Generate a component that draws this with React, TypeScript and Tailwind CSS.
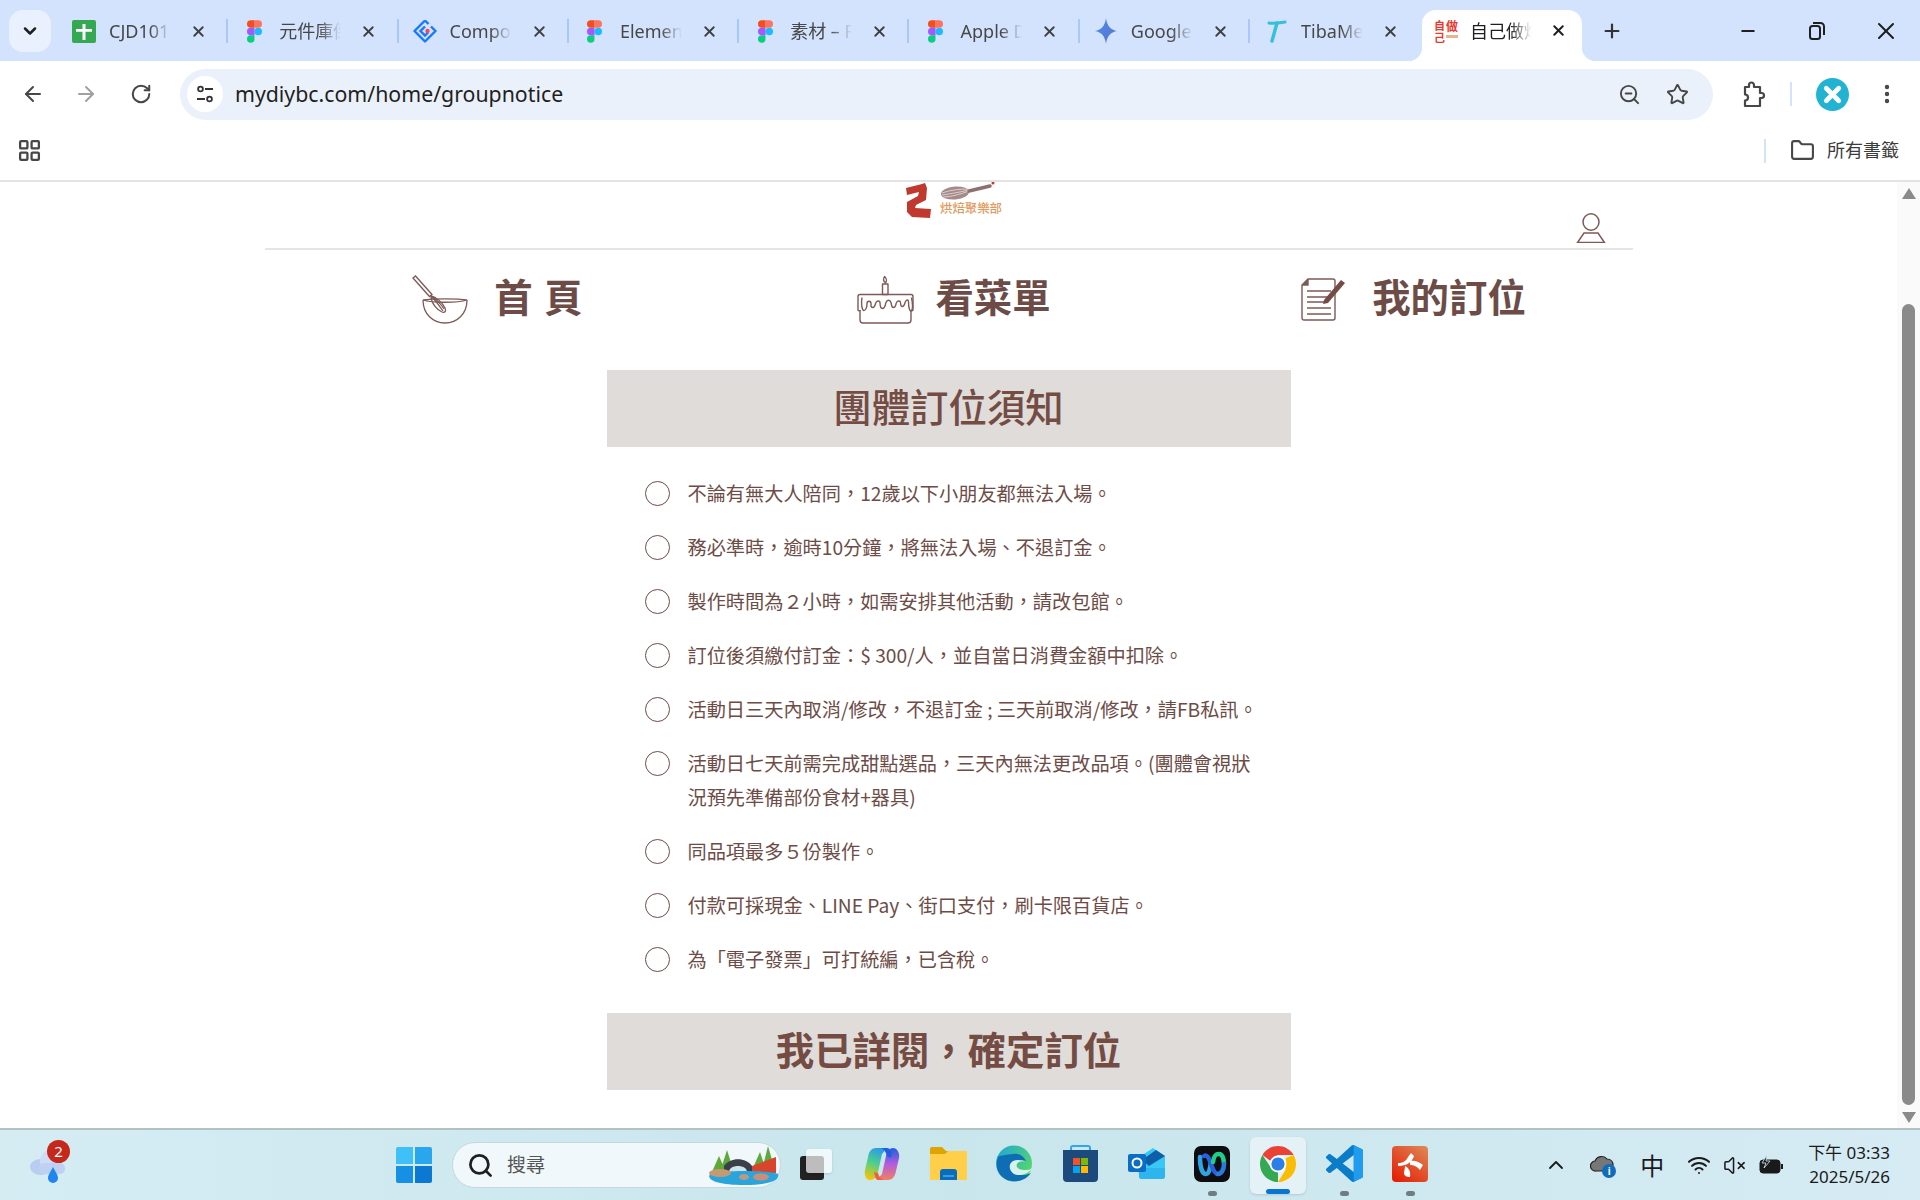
import { ArrowLeft, ArrowRight, ChevronDown, ChevronUp, EllipsisVertical, Folder, LayoutGrid, Minus, Plus, RotateCw, Search, Star, VolumeX, Wifi, X, ZoomOut } from "lucide-react";
import type { ReactNode } from "react";

const uiFont = "font-['Noto_Sans','Noto_Sans_CJK_TC',sans-serif]";

const Figma = () => (
  <svg width="15" height="23" viewBox="0 0 38 57">
    <path d="M19 28.5a9.5 9.5 0 1 1 19 0 9.5 9.5 0 0 1-19 0z" fill="#1abcfe" />
    <path d="M0 47.5A9.5 9.5 0 0 1 9.5 38H19v9.5a9.5 9.5 0 1 1-19 0z" fill="#0acf83" />
    <path d="M19 0v19h9.5a9.5 9.5 0 1 0 0-19H19z" fill="#ff7262" />
    <path d="M0 9.5A9.5 9.5 0 0 0 9.5 19H19V0H9.5A9.5 9.5 0 0 0 0 9.5z" fill="#f24e1e" />
    <path d="M0 28.5A9.5 9.5 0 0 0 9.5 38H19V19H9.5A9.5 9.5 0 0 0 0 28.5z" fill="#a259ff" />
  </svg>
);

const Sheets = () => (
  <svg width="24" height="23" viewBox="0 0 24 23">
    <rect width="24" height="23" rx="2" fill="#34a853" />
    <path d="M10.500 4h3v5H20v2.800h-6.500V20h-3v-8.200H4V9h6.500z" fill="#fff" />
  </svg>
);

const Diamond = () => (
  <svg width="24" height="24" viewBox="0 0 24 24" fill="none">
    <path d="M12 1.500 1.500 12 12 22.500 22.500 12 18 7.500" stroke="#1677ff" strokeWidth="2.400" strokeLinejoin="round" />
    <path d="M12 1.500 15.500 5M12 7.500 7.500 12 12 16.500 15 13.500" stroke="#1677ff" strokeWidth="2.400" />
    <circle cx="14.500" cy="12" r="2.200" fill="#f5484f" />
  </svg>
);

const Gemini = () => (
  <svg width="22" height="26" viewBox="0 0 24 24" preserveAspectRatio="none">
    <defs>
      <linearGradient id="gem" x1="0" y1="0" x2="1" y2="1">
        <stop offset="0" stopColor="#4a90e8" />
        <stop offset="1" stopColor="#5b6fd0" />
      </linearGradient>
    </defs>
    <path d="M12 0c1 7 5 11 12 12-7 1-11 5-12 12-1-7-5-11-12-12 7-1 11-5 12-12z" fill="url(#gem)" />
  </svg>
);

const Tiba = () => (
  <svg width="24" height="24" viewBox="0 0 24 24" fill="none">
    <path d="M5 4c5 1 10 0 16-1" stroke="#35bfd8" strokeWidth="3" strokeLinecap="round" />
    <path d="M13 4 8 22" stroke="#35bfd8" strokeWidth="3.400" strokeLinecap="round" />
  </svg>
);

const SiteIcon = () => (
  <div className="flex w-[24px] h-[24px] items-start gap-[1px] overflow-hidden font-['Noto_Sans_CJK_TC',sans-serif] font-bold text-[#e8392f] leading-none">
    <div className="flex flex-col text-[11px] leading-[12px]">
      <span>自</span>
      <span>己</span>
    </div>
    <div className="flex flex-col items-center text-[12px] leading-[14px]">
      <span>做</span>
      <div className="mt-[2px] h-[3px] w-[12px] bg-[#e8b48a]" />
    </div>
  </div>
);

const tabs: { icon: ReactNode; title: string }[] = [
  { icon: <Sheets />, title: "CJD101" },
  { icon: <Figma />, title: "元件庫倒" },
  { icon: <Diamond />, title: "Compon" },
  { icon: <Figma />, title: "Element" },
  { icon: <Figma />, title: "素材 – Fi" },
  { icon: <Figma />, title: "Apple De" },
  { icon: <Gemini />, title: "Google" },
  { icon: <Tiba />, title: "TibaMe" },
];

const fade = "[mask-image:linear-gradient(to_right,black_65%,transparent_100%)]";

const Tab = ({ icon, title, last }: { icon: ReactNode; title: string; last: boolean }) => (
  <div className="flex w-[170.300px] h-[42px] items-center">
    <div className="flex w-[24px] ml-[14px] justify-center shrink-0">{icon}</div>
    <span className={`ml-[13px] w-[62px] shrink-0 overflow-hidden whitespace-nowrap text-[18px] text-[#474747] ${fade}`}>{title}</span>
    <X className="ml-[19px] shrink-0 text-[#3f3f3f]" size={17} strokeWidth={2.600} />
    <div className={`ml-auto h-[24px] w-[2px] ${last ? "bg-transparent" : "bg-[#a8c7fa]"}`} />
  </div>
);

const PuzzleIcon = () => (
  <svg width="25" height="27" viewBox="0 0 25 27" fill="none" stroke="#474747" strokeWidth="2.200" strokeLinejoin="round">
    <path d="M4 6h4V4a2.500 2.500 0 0 1 5 0v2h6v6h1.500a2.500 2.500 0 0 1 0 5H19v8H4v-5.500a3 3 0 0 0 0-6z" />
  </svg>
);

const RestoreIcon = () => (
  <svg width="18" height="20" viewBox="0 0 18 20" fill="none" stroke="#1f1f1f" strokeWidth="2">
    <rect x="2" y="5" width="10" height="13" rx="2.500" />
    <path d="M5 2h7.500A3.500 3.500 0 0 1 16 5.500V14" />
  </svg>
);

const BrowserChrome = () => (
  <div className={`${uiFont} shrink-0`}>
    <div className="flex h-[61px] bg-[#d3e3fd] pt-[10px] items-start pl-[9px]">
      <div className="flex w-[42px] h-[42px] items-center justify-center rounded-[14px] bg-[#e9f1fe]">
        <ChevronDown size={20} strokeWidth={3} className="text-[#1f1f1f]" />
      </div>
      <div className="w-[7px]" />
      {tabs.map((t, i) => (
        <Tab key={t.title} icon={t.icon} title={t.title} last={i === tabs.length - 1} />
      ))}
      <div className="relative ml-[1.600px] flex w-[160px] h-[51px] items-start pt-[9px] rounded-t-[14px] bg-white">
        <span className="absolute -left-[14px] bottom-0 h-[14px] w-[14px] bg-[radial-gradient(circle_at_0_0,#d3e3fd_14px,white_14.5px)]" />
        <span className="absolute -right-[14px] bottom-0 h-[14px] w-[14px] bg-[radial-gradient(circle_at_100%_0,#d3e3fd_14px,white_14.5px)]" />
        <div className="ml-[12px] shrink-0"><SiteIcon /></div>
        <span className={`ml-[12px] w-[62px] shrink-0 overflow-hidden whitespace-nowrap text-[18px] leading-[24px] text-[#1f1f1f] ${fade}`}>自己做烘</span>
        <X className="ml-[18px] mt-[3px] shrink-0 text-[#1f1f1f]" size={17} strokeWidth={2.800} />
      </div>
      <div className="flex w-[62px] h-[42px] items-center justify-center">
        <Plus size={22} strokeWidth={2.400} className="text-[#333] ml-[-2px]" />
      </div>
      <div className="ml-auto flex h-[30px] items-center mt-[6px] text-[#1f1f1f]">
        <div className="flex w-[69px] justify-center"><Minus size={20} strokeWidth={2.200} /></div>
        <div className="flex w-[69px] justify-center"><RestoreIcon /></div>
        <div className="flex w-[69px] justify-center"><X size={28} strokeWidth={1.700} /></div>
      </div>
    </div>
    <div className="flex h-[61px] items-center bg-white rounded-t-[12px] pt-[5px] text-[#474747]">
      <div className="flex w-[66px] justify-center"><ArrowLeft size={24} strokeWidth={2} /></div>
      <div className="flex w-[40px] justify-center"><ArrowRight size={24} strokeWidth={2} className="text-[#a0a0a0]" /></div>
      <div className="flex w-[70px] justify-center"><RotateCw size={22} strokeWidth={2.200} /></div>
      <div className="ml-[4px] flex w-[1533px] h-[51px] items-center rounded-full bg-[#ebf1fa]">
        <div className="ml-[7px] flex w-[36px] h-[36px] items-center justify-center rounded-full bg-white">
          <svg width="20" height="20" viewBox="0 0 20 20" fill="none" stroke="#333" strokeWidth="1.800">
            <circle cx="5.500" cy="5" r="2.400" />
            <path d="M10 5h8M2 15h8" />
            <circle cx="14.500" cy="15" r="2.400" />
          </svg>
        </div>
        <span className="ml-[12px] text-[21.300px] text-[#1f1f1f]">mydiybc.com/home/groupnotice</span>
        <ZoomOut size={23} strokeWidth={2} className="ml-auto" />
        <Star size={23} strokeWidth={2} className="ml-[25px] mr-[24px]" />
      </div>
      <div className="ml-[28px]"><PuzzleIcon /></div>
      <div className="ml-[24px] h-[24px] w-[2px] bg-[#d3e3fd]" />
      <div className="ml-[24px] flex w-[33px] h-[33px] items-center justify-center rounded-full bg-[#22b2d2]">
        <X size={25} strokeWidth={4.500} className="text-white" />
      </div>
      <EllipsisVertical size={24} strokeWidth={2.400} className="ml-[26px]" />
    </div>
    <div className="flex h-[60px] items-center bg-white border-b-2 border-[#e3e3e3] pb-[1px] text-[#474747]">
      <LayoutGrid size={25} strokeWidth={2.200} className="ml-[17px]" />
      <div className="ml-auto h-[24px] w-[2px] bg-[#d3e3fd]" />
      <Folder size={25} strokeWidth={2} className="ml-[24px]" />
      <span className="ml-[12px] mr-[21px] text-[18px] text-[#3c3c3c]">所有書籤</span>
    </div>
  </div>
);

const SiteLogo = () => (
  <div className="ml-[10px] flex h-[37px] items-start gap-[9px] overflow-hidden">
    <svg width="26" height="36" viewBox="0 0 26 36">
      <path d="M1 6 17 2 20 1 22 6 21 18 11 23 10 26 26 27 25 36 7 35 2 30 2 20 13 14 14 10 2 13z" fill="#c0392e" />
    </svg>
    <div className="flex flex-col">
      <svg width="62" height="23" viewBox="0 0 62 23" fill="none" className="-mt-[1px]">
        <ellipse cx="15" cy="12" rx="14" ry="6.500" transform="rotate(-5 15 12)" fill="#a58a89" />
        <path d="M2 12c8-3 18-4 27-4M2 14c8-1 18-3 27-5M3 16c8 0 18-3 26-6" stroke="#e8dedd" strokeWidth="0.800" />
        <path d="M29 10 50 5" stroke="#8e6f6e" strokeWidth="3.500" strokeLinecap="round" />
        <circle cx="53" cy="2" r="1.500" fill="#d8332a" />
      </svg>
      <span className="-mt-[2px] text-[12.400px] leading-[13px] whitespace-nowrap font-['Noto_Sans_CJK_TC',sans-serif] font-medium text-[#df9a5e]">烘焙聚樂部</span>
    </div>
  </div>
);

const WhiskIcon = () => (
  <svg width="57" height="49" viewBox="0 0 57 49" fill="none" stroke="#7d5a55" strokeWidth="1.300">
    <path d="M11 25c9-1.500 35-1.500 44 0M11 25c9 3 35 3 44 0" />
    <path d="M11 25C11 39 21 48 33 48S55 39 55 25" />
    <path d="M1 3 3.500 1 20 19.500 17.500 21.500z" />
    <path d="M19 21c5 1 11 6 14 12 1.500 3 0 5-3 4-5-2-11-9-11-16z" />
    <path d="M19 21c3 3 8 9 12 15M19 21c4 2 10 8 13 13" />
  </svg>
);

const CakeIcon = () => (
  <svg width="57" height="49" viewBox="0 0 57 49" fill="none" stroke="#7d5a55" strokeWidth="1.400" strokeLinejoin="round">
    <path d="M27.500 1.500c2 2 3 3.500 1 6.500-2.500-2-2.500-4-1-6.500z" />
    <path d="M25.500 9h5.500v10.500h-5.500z" />
    <path d="M1 35V21.500c0-1.300.7-2 2-2h51c1.300 0 2 .7 2 2V35" />
    <path d="M3 35v10c0 2 1 3 3 3h45c2 0 3-1 3-3V35" />
    <path d="M1 35c0 1 2 1 2 0" />
    <path d="M54 35c0 1 2 1 2 0" />
    <path d="M5 22.500c-1 7 0 13 2 13s3-4 3-7 4-3 4 0 0 4 2 4 2-3 3-5 4-2 4 0 0 6 2.500 6 2.500-3 3.500-6 4-3 5 0 0 5 2.500 5 2-3 3-5 4-2 4 0 0 4 2 4 2-3 3-5 3-2 3 0c0 5 1 11 3 9 1.500-2 1-8 0-13" />
  </svg>
);

const NoteIcon = () => (
  <svg width="45" height="43" viewBox="0 0 45 43" fill="none" stroke="#7d5a55" strokeWidth="1.400">
    <path d="M7 1h25c1.500 0 2 .7 2 2v37c0 1.300-.7 2-2 2H3c-1.300 0-2-.7-2-2V7z" />
    <path d="M7 1v6H1" fill="#7d5a55" />
    <path d="M6 13h24M6 19h22M6 24h18M6 30h24M6 36h24" strokeWidth="1.500" />
    <path d="M23 22 40 2l4 3-17 20-5 1z" fill="#744c44" stroke="none" />
  </svg>
);

const UserIcon = () => (
  <svg width="30" height="30" viewBox="0 0 30 30" fill="none" stroke="#7d5a55" strokeWidth="1.500">
    <ellipse cx="15" cy="9" rx="8" ry="8.200" />
    <path d="M8 20h14l6.500 9.500H1.500z" />
  </svg>
);

const notices = [
  "不論有無大人陪同，12歲以下小朋友都無法入場。",
  "務必準時，逾時10分鐘，將無法入場、不退訂金。",
  "製作時間為２小時，如需安排其他活動，請改包館。",
  "訂位後須繳付訂金：$ 300/人，並自當日消費金額中扣除。",
  "活動日三天內取消/修改，不退訂金 ; 三天前取消/修改，請FB私訊。",
  "活動日七天前需完成甜點選品，三天內無法更改品項。(團體會視狀況預先準備部份食材+器具)",
  "同品項最多５份製作。",
  "付款可採現金、LINE Pay、街口支付，刷卡限百貨店。",
  "為「電子發票」可打統編，已含稅。",
];

const Page = () => (
  <div className="flex flex-1 min-h-0 overflow-hidden bg-white">
    <div className="flex-1 font-['Noto_Sans_CJK_TC',sans-serif] text-[#6d4c48]">
      <div className="mx-auto w-[1368px]">
        <div className="grid h-[68px] grid-cols-[1fr_auto_1fr] items-start border-b-2 border-[#e5e5e5]">
          <div />
          <SiteLogo />
          <div className="flex h-full items-end justify-end pb-[5px] pr-[27px]"><UserIcon /></div>
        </div>
        <div className="grid h-[120px] grid-cols-3 pt-[24px] items-start">
          <div className="flex h-[50px] items-center justify-center gap-[25px] pl-[10px]">
            <WhiskIcon />
            <span className="pb-[7px] text-[38.400px] font-bold [word-spacing:3px]">首 頁</span>
          </div>
          <div className="flex h-[50px] items-center justify-center gap-[21px] pl-[11px]">
            <CakeIcon />
            <span className="pb-[7px] text-[38.400px] font-bold">看菜單</span>
          </div>
          <div className="flex h-[50px] items-center justify-center gap-[26px] pl-[18px]">
            <NoteIcon />
            <span className="pb-[7px] text-[38.400px] font-bold">我的訂位</span>
          </div>
        </div>
        <div className="mx-auto w-[684px]">
          <div className="flex h-[77px] items-center justify-center bg-[#e0dcda] pb-[5px] text-[38.400px] font-medium text-[#744c44]">團體訂位須知</div>
          <ul className="mt-[29px] flex flex-col gap-[20px] pl-[38px]">
            {notices.map((n) => (
              <li key={n} className="flex items-start gap-[18px]">
                <span className="mt-[5px] h-[25px] w-[25px] shrink-0 rounded-full border border-[#6d4c48]" />
                <span className="w-[575px] text-[19.200px] leading-[34px]">{n}</span>
              </li>
            ))}
          </ul>
          <div className="mt-[37px] flex h-[77px] items-center justify-center bg-[#e0dcda] pb-[6px] text-[38.400px] font-bold text-[#744c44]">我已詳閱，確定訂位</div>
        </div>
      </div>
    </div>
    <div className="flex w-[23px] shrink-0 flex-col items-center bg-[#fafafa] pt-[6px]">
      <div className="h-0 w-0 border-x-[7px] border-b-[11px] border-x-transparent border-b-[#8a8a8a]" />
      <div className="mt-[105px] w-[13px] flex-1 rounded-full bg-[#8a8a8a]" />
      <div className="mb-[5px] mt-[7px] h-0 w-0 border-x-[7px] border-t-[11px] border-x-transparent border-t-[#8a8a8a]" />
    </div>
  </div>
);

const Copilot = () => (
  <svg width="36" height="36" viewBox="0 0 36 36">
    <defs>
      <linearGradient id="cp1" x1="0.600" y1="0" x2="0.300" y2="1">
        <stop offset="0" stopColor="#2a9be8" />
        <stop offset="0.500" stopColor="#4fd08a" />
        <stop offset="1" stopColor="#f7c500" />
      </linearGradient>
      <linearGradient id="cp2" x1="0.500" y1="0" x2="0.500" y2="1">
        <stop offset="0" stopColor="#1f5fe0" />
        <stop offset="0.500" stopColor="#b45be0" />
        <stop offset="1" stopColor="#f08060" />
      </linearGradient>
    </defs>
    <path d="M24 34H13l5-6 4-18c1-5 4-8 7-8 4 0 7 5 6 10l-3 13c-1 6-4 9-8 9z" fill="url(#cp2)" />
    <path d="M12 2h11l-5 6-4 18c-1 5-4 8-8 8-4 0-6-5-5-10l3-13c1-6 4-9 8-9z" fill="url(#cp1)" />
    <path d="M17 2h6c2 0 4 2 5 5l-1 5-4-2c-1-4-3-7-6-8z" fill="#1f5fe0" />
    <path d="M10 26l4 1c1 4 3 6 6 7h-6c-2 0-3-3-4-8z" fill="#f0603a" />
  </svg>
);

const Explorer = () => (
  <svg width="37" height="33" viewBox="0 0 37 33">
    <path d="M0 2a2 2 0 0 1 2-2h10l4 4h19a2 2 0 0 1 2 2v3H0z" fill="#e0a400" />
    <path d="M0 7h15l3-3h19v29H0z" fill="#ffcf4a" />
    <path d="M10 33V25a3 3 0 0 1 3-3h11a3 3 0 0 1 3 3v8z" fill="#0a6cbd" />
    <path d="M13 28h11v2H13z" fill="#3c9ae0" />
  </svg>
);

const Edge = () => (
  <svg width="37" height="37" viewBox="0 0 37 37">
    <defs>
      <linearGradient id="ed1" x1="0" y1="0" x2="1" y2="0.600">
        <stop offset="0" stopColor="#1ca5d8" />
        <stop offset="1" stopColor="#54d66e" />
      </linearGradient>
    </defs>
    <circle cx="18" cy="18.500" r="18" fill="url(#ed1)" />
    <path d="M2 12c-4 10 1 22 13 24 6 1 14 0 20-8-4 2-9 3-13 1-5-3-6-9-1-12 3-2 7-2 9-1-3-6-8-8-13-7C10 10 5 10 2 12z" fill="#0f6db5" />
    <path d="M17 16c-5 3-4 10 1 13 4 2 9 1 13-1 2-1 4-3 5-5-2 2-5 2-8 2-3 0-6-1-7-3-1-2 0-4 2-5 2-1 5-1 7 0-3-2-9-3-13-1z" fill="#d7f2ec" />
  </svg>
);

const Store = () => (
  <svg width="35" height="37" viewBox="0 0 35 37">
    <path d="M8 8V3a2 2 0 0 1 2-2h15a2 2 0 0 1 2 2v5" fill="none" stroke="#2ea8e8" strokeWidth="2" />
    <path d="M0 5h35v28a4 4 0 0 1-4 4H4a4 4 0 0 1-4-4z" fill="#1c4a7c" />
    <rect x="10" y="13" width="7" height="7" fill="#f2522a" />
    <rect x="18" y="13" width="7" height="7" fill="#7eb800" />
    <rect x="10" y="21" width="7" height="7" fill="#03a4ef" />
    <rect x="18" y="21" width="7" height="7" fill="#ffb901" />
  </svg>
);

const Outlook = () => (
  <svg width="37" height="31" viewBox="0 0 37 31">
    <path d="M10 10 25 0l12 8v20a3 3 0 0 1-3 3H14a3 3 0 0 1-3-3z" fill="#38c8f5" />
    <path d="M14 12 28 2l9 6-16 10z" fill="#0f5ea8" />
    <path d="M11 20h26v8a3 3 0 0 1-3 3H14a3 3 0 0 1-3-3z" fill="#2fb5ee" />
    <rect x="0" y="6" width="18" height="18" rx="2" fill="#0a6ec4" />
    <circle cx="9" cy="15" r="4.500" fill="none" stroke="#fff" strokeWidth="2" />
  </svg>
);

const Webex = () => (
  <svg width="36" height="36" viewBox="0 0 36 36" fill="none">
    <rect width="36" height="36" rx="7" fill="#0e0e10" />
    <path d="M6 11c0 12 3 17 6 17s4-5 5-12" stroke="#2fa3e6" strokeWidth="4.500" strokeLinecap="round" />
    <path d="M10 10c3-2 5 2 7 8s4 10 7 10" stroke="#2a5fe0" strokeWidth="4.500" strokeLinecap="round" />
    <path d="M19 16c1-7 3-8 6-8s5 4 5 10" stroke="#1fd08a" strokeWidth="4.500" strokeLinecap="round" />
    <path d="M24 28c3 0 6-4 6-10" stroke="#2a7be0" strokeWidth="4.500" strokeLinecap="round" />
  </svg>
);

const Chrome = () => (
  <svg width="36" height="36" viewBox="0 0 24 24">
    <path d="M1.610 6A12 12 0 0 1 22.390 6H12L7 10z" fill="#ea4335" />
    <path d="M22.390 6A12 12 0 0 1 12 24l5-8 .2-8z" fill="#fbbc04" />
    <path d="M12 24A12 12 0 0 1 1.610 6L7 14l5 2z" fill="#34a853" />
    <circle cx="12" cy="12" r="5.600" fill="#fff" />
    <circle cx="12" cy="12" r="4.400" fill="#2d7fe8" />
  </svg>
);

const VsCode = () => (
  <svg width="37" height="37" viewBox="0 0 24 24">
    <path d="M23.150 2.587L18.210.21a1.494 1.494 0 0 0-1.705.29l-9.460 8.630-4.120-3.128a.999.999 0 0 0-1.276.057L.327 7.261A1 1 0 0 0 .326 8.740L3.899 12 .326 15.260a1 1 0 0 0 .001 1.479L1.650 17.940a.999.999 0 0 0 1.276.057l4.120-3.128 9.460 8.630a1.492 1.492 0 0 0 1.704.29l4.942-2.377A1.500 1.500 0 0 0 24 20.060V3.939a1.500 1.500 0 0 0-.850-1.352zm-5.146 14.861L10.826 12l7.178-5.448v10.896z" fill="#0a7cc8" />
    <path d="M18 .3l5.150 2.287A1.500 1.500 0 0 1 24 3.940V20.060a1.500 1.500 0 0 1-.850 1.350L18 23.700z" fill="#1f9cf0" />
  </svg>
);

const RedApp = () => (
  <svg width="36" height="36" viewBox="0 0 36 36">
    <defs>
      <linearGradient id="red1" x1="0.200" y1="1" x2="1" y2="0">
        <stop offset="0" stopColor="#e52207" />
        <stop offset="1" stopColor="#dd8a58" />
      </linearGradient>
    </defs>
    <rect width="36" height="36" rx="4" fill="url(#red1)" />
    <path d="M6 17c5 0 8-2 10-6l3-4 3 3c-2 6-7 10-16 10zM18 15c5-1 9 1 13 4l-3 5c-3-4-7-5-10-5zM13 20c4 2 6 6 5 11-3 0-6-1-6-4 0-2 1-4 1-7z" fill="#fff" />
  </svg>
);

const taskIcons: { icon: ReactNode; state?: "dot" | "active" }[] = [
  {
    icon: (
      <div className="flex w-[33px] h-[33px] items-end">
        <div className="h-[24px] w-[24px] rounded-[3px] bg-[#222]" />
        <div className="-ml-[18px] mb-[7px] h-[24px] w-[26px] rounded-[3px] bg-white/70 shadow-sm" />
      </div>
    ),
  },
  { icon: <Copilot /> },
  { icon: <Explorer /> },
  { icon: <Edge /> },
  { icon: <Store /> },
  { icon: <Outlook /> },
  { icon: <Webex />, state: "dot" },
  { icon: <Chrome />, state: "active" },
  { icon: <VsCode />, state: "dot" },
  { icon: <RedApp />, state: "dot" },
];

const Taskbar = () => (
  <div className={`${uiFont} flex h-[72px] shrink-0 items-center border-t-2 border-[#b4c0c4] bg-gradient-to-r from-[#d5ecf3] via-[#c8e6ec] to-[#d6ebf4] text-[#1a1a1a]`}>
    <div className="relative ml-[29px] flex h-[40px] w-[38px] items-end">
      <svg width="38" height="36" viewBox="0 0 38 36">
        <ellipse cx="12" cy="18" rx="11" ry="8" fill="#b9ccf2" />
        <circle cx="22" cy="12" r="11" fill="#d0dcf6" />
        <rect x="10" y="14" width="26" height="11" rx="5" fill="#c0d0f3" />
        <path d="M24 18c2 4 5 8 5 11a5 5 0 0 1-10 0c0-3 3-7 5-11z" fill="#1e86ec" />
      </svg>
      <span className="absolute -top-[5px] left-[18px] flex h-[23px] w-[23px] items-center justify-center rounded-full bg-[#c4291c] text-[15px] text-white">2</span>
    </div>
    <div className="ml-[329px] grid h-[36px] w-[36px] grid-cols-2 gap-[1.500px] overflow-hidden rounded-[2px]">
      <div className="bg-[#3fc0f8]" />
      <div className="bg-[#28a6ee]" />
      <div className="bg-[#1590e4]" />
      <div className="bg-[#0b78d2]" />
    </div>
    <div className="ml-[20px] flex h-[46px] w-[329px] items-center rounded-full border border-[#c4d8dd] bg-[#f1f8fb]">
      <Search size={27} strokeWidth={2.400} className="ml-[14px] text-[#1f1f1f]" />
      <span className="ml-[13px] text-[19px] text-[#555]">搜尋</span>
      <svg width="74" height="42" viewBox="0 0 74 42" className="ml-auto">
        <path d="M6 28 13 12l7 16zM14 28 21 6l7 22zM46 26 54 8l6 18zM56 26 62 2l7 24zM28 28 33 16l6 12z" fill="#5fa83a" />
        <path d="M18 22c6-9 22-9 28 0v6H18z" fill="#3a3f4a" />
        <path d="M23 28c0-8 18-8 18 0" fill="#cfe3ea" />
        <path d="M46 22l24-9v16H46z" fill="#d8452c" />
        <path d="M4 30c10-4 60-4 68 0 2 6-8 11-34 11S0 36 4 30z" fill="#2aa5dc" />
        <ellipse cx="14" cy="29" rx="11" ry="4" fill="#c49a72" />
        <ellipse cx="38" cy="33" rx="5" ry="3" fill="#bb9988" />
        <ellipse cx="55" cy="33" rx="8" ry="3.500" fill="#c98f78" />
      </svg>
    </div>
    <div className="ml-[2px] flex items-center">
      {taskIcons.map((t, i) => (
        <div key={i} className={`relative mx-[5px] flex h-[57px] w-[56px] items-center justify-center rounded-[6px] pb-[3px] ${t.state === "active" ? "bg-[#e4f2f7] shadow-sm" : ""}`}>
          {t.icon}
          {t.state === "dot" && <span className="absolute -bottom-[2px] h-[5px] w-[9px] rounded-full bg-[#6f7c82]" />}
          {t.state === "active" && <span className="absolute bottom-0 h-[5px] w-[24px] rounded-full bg-[#0a74d2]" />}
        </div>
      ))}
    </div>
    <div className="ml-auto flex items-center">
      <ChevronUp size={24} strokeWidth={1.800} />
      <div className="relative ml-[22px] h-[22px] w-[26px]">
        <svg width="24" height="18" viewBox="0 0 24 18">
          <path d="M6 17a5 5 0 0 1-1-10c2-5 9-6 12-2 4 0 6 3 6 6 0 4-2 6-5 6z" fill="#777" stroke="#222" strokeWidth="1.200" />
        </svg>
        <span className="absolute -bottom-[2px] right-0 flex h-[14px] w-[14px] items-center justify-center rounded-full bg-[#0f6cbd] text-[10px] font-bold leading-none text-white">i</span>
      </div>
      <span className="ml-[24px] font-['Noto_Sans_CJK_TC',sans-serif] text-[24px] leading-[30px]">中</span>
      <Wifi size={24} strokeWidth={2} className="ml-[23px]" />
      <VolumeX size={23} strokeWidth={1.600} className="ml-[12px]" />
      <svg width="25" height="20" viewBox="0 0 25 20" className="ml-[13px]">
        <rect x="1" y="5" width="20" height="13" rx="3" fill="#1a1a1a" stroke="#1a1a1a" />
        <rect x="22" y="9" width="2" height="5" fill="#1a1a1a" />
        <path d="M8 0 3 8h4l-2 5 6-7H7z" fill="#1a1a1a" stroke="#d5ecf3" strokeWidth="0.800" />
      </svg>
      <div className="ml-[24px] mr-[30px] flex flex-col items-end text-[17px] leading-[24px]">
        <span>下午 03:33</span>
        <span>2025/5/26</span>
      </div>
    </div>
  </div>
);

const App = () => {
  return (
    <div className="flex h-[1200px] w-[1920px] flex-col overflow-hidden">
      <BrowserChrome />
      <Page />
      <Taskbar />
    </div>
  );
};

export default App;
